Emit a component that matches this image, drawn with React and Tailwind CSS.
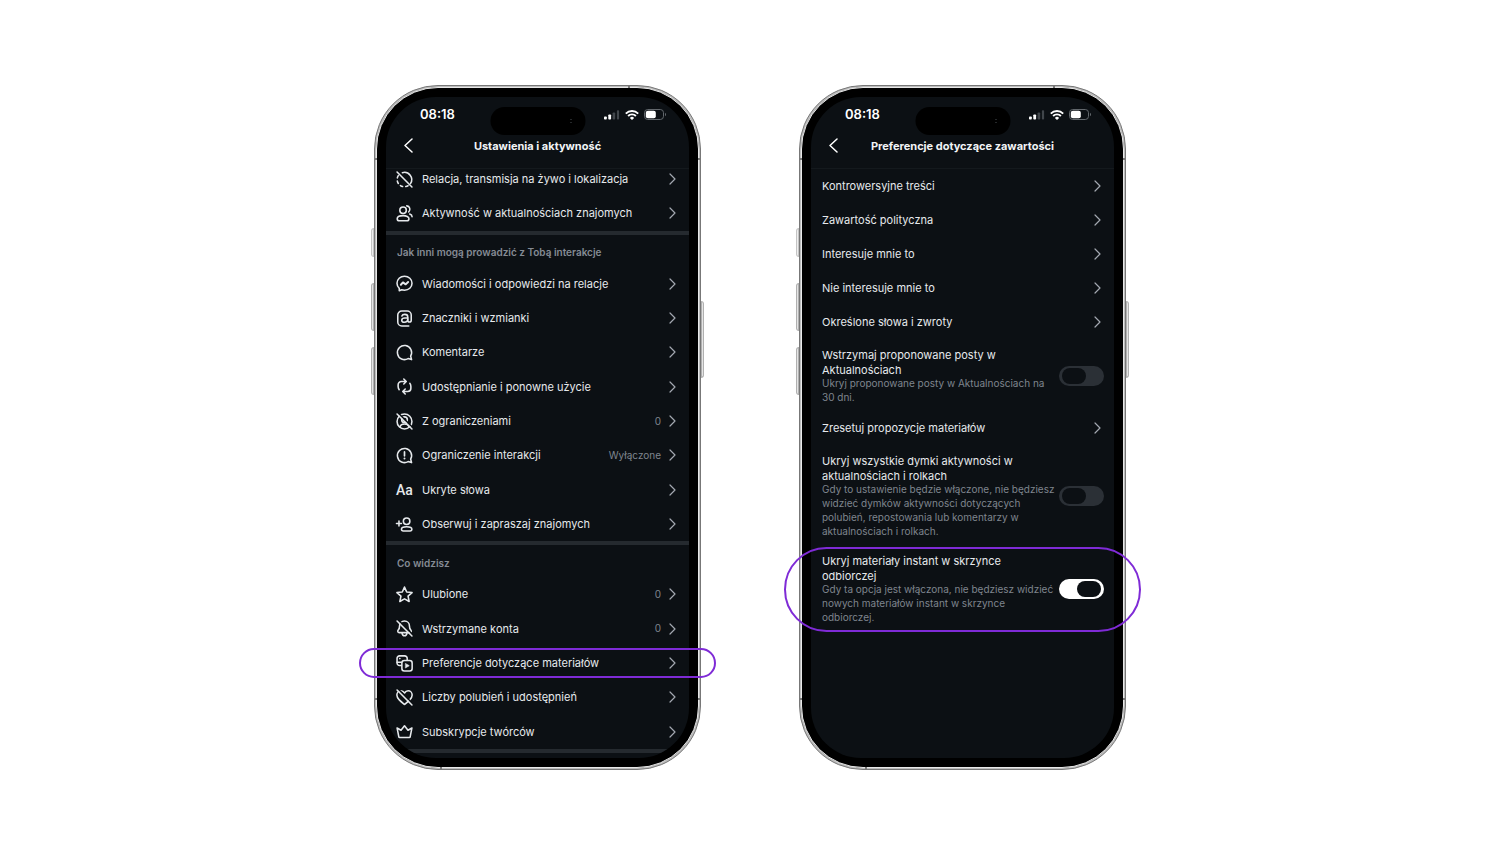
import React from "react";

const stroke = {
  fill: "none",
  stroke: "currentColor",
  strokeWidth: 2.2,
  strokeLinecap: "round",
  strokeLinejoin: "round",
};

function Icon({ children }) {
  return (
    <svg viewBox="0 0 24 24" className="size-[17px] shrink-0 overflow-visible" aria-hidden="true" {...stroke}>
      {children}
    </svg>
  );
}

const SLASH = (
  <>
    <path d="M3.5 .5 23.5 20.5" stroke="#0c1014" />
    <path d="M1.5 1.5 22.5 22.5" />
  </>
);
const BUBBLE = "M20.656 17.008a9.993 9.993 0 1 0-3.59 3.615L22 22Z";

const icons = {
  story: (
    <Icon>
      <path d="M9 2.300A10.300 10.300 0 0 1 20.600 17.600" />
      <path d="M1.900 9.800a10 10 0 0 1 1.300-3.200M1.900 14.200a10 10 0 0 0 1.400 3.400M6.300 20.500a10 10 0 0 0 3 1.400M13.800 22a10 10 0 0 0 3.200-1.200" />
      <path d="M1.500 1.500 22.500 22.500" />
    </Icon>
  ),
  friends: (
    <Icon>
      <circle cx="10" cy="7.500" r="4.600" />
      <path d="M10 15c-4.600 0-8.300 1.600-8.300 4.300 0 1.900 1.300 2.900 3.100 2.900h10.400c1.800 0 3.100-1 3.100-2.900 0-2.700-3.700-4.300-8.300-4.300Z" />
      <path d="M15.200 1.200a4.900 4.900 0 0 1 2.800 8.500M19.300 12.800c2 .7 3.400 1.900 3.400 3.700" />
    </Icon>
  ),
  messenger: (
    <Icon>
      <path d="M12 1.700C6 1.700 1.400 6 1.400 11.700c0 2.900 1.200 5.300 3.200 7.100V22.300l3.400-1.500c1.200.4 2.600.6 4 .6 6 0 10.600-4.100 10.600-9.700S18 1.700 12 1.700Z" />
      <path d="m6.900 13.800 2.900-3.300 3.900 2.700 3.400-3.300" strokeWidth="2.800" />
    </Icon>
  ),
  mention: (
    <Icon>
      <path d="M18 22.500H8.200A5.700 5.700 0 0 1 2.500 16.800V7.200A5.700 5.700 0 0 1 8.200 1.500h7.600a5.700 5.700 0 0 1 5.700 5.700v7.300c0 3.400-4.900 3.400-4.900 0V9.800c0-2.400-1.600-3.600-4.100-3.600-2.100 0-3.700.8-4.200 2.400" />
      <path d="M16.600 11.300h-4c-2.900 0-4.500.9-4.500 3 0 1.900 1.400 2.900 3.500 2.900 2.800 0 5-1.500 5-4.100" />
    </Icon>
  ),
  comment: (
    <Icon>
      <path d={BUBBLE} />
    </Icon>
  ),
  reshare: (
    <Icon>
      <path d="M4.500 16.500A8.300 8.300 0 0 1 3 12V9.500A4.500 4.500 0 0 1 7.500 5H14M11 1.500 14.500 5 11 8.500" />
      <path d="M19.500 7.500c1 1.200 1.500 2.700 1.500 4.500v2.500a4.500 4.500 0 0 1-4.500 4.500H10M13 22.500 9.500 19l3.500-3.500" />
    </Icon>
  ),
  restricted: (
    <Icon>
      <circle cx="12" cy="12" r="10.500" />
      <circle cx="12" cy="9.500" r="4" />
      <path d="M5.500 19.500c.8-2.500 3-4 6.500-4s5.700 1.500 6.500 4" />
      {SLASH}
    </Icon>
  ),
  limit: (
    <Icon>
      <path d={BUBBLE} />
      <path d="M12 7v5.500" strokeWidth="2.400" />
      <circle cx="12" cy="16.300" r=".6" fill="currentColor" strokeWidth="1.600" />
    </Icon>
  ),
  invite: (
    <Icon>
      <path d="M4.200 7.200v7M.7 10.700h7" />
      <circle cx="15" cy="7.500" r="4.600" />
      <path d="M15 15.200c-4 0-7.300 1.200-7.300 3.600 0 1.500 1.100 2.400 2.600 2.400h9.500c1.500 0 2.600-.9 2.600-2.400 0-2.400-3.400-3.600-7.400-3.600Z" />
    </Icon>
  ),
  star: (
    <Icon>
      <path d="m12 1.500 3.100 7 7.600.8-5.700 5.100 1.600 7.500L12 18.100l-6.600 3.800L7 14.400 1.300 9.300l7.600-.8Z" />
    </Icon>
  ),
  bell: (
    <Icon>
      <path d="M12 1.500c-4 0-7 3-7 6.800 0 3.200-.6 4.500-1.900 5.900-1.200 1.400-.6 3.600 1.500 3.600h14.800c2.100 0 2.700-2.200 1.500-3.600-1.300-1.400-1.900-2.700-1.900-5.900 0-3.800-3-6.800-7-6.800Z" />
      <path d="M8.500 18.500c.4 2.500 1.700 3.800 3.500 3.800s3.100-1.300 3.500-3.800" />
      {SLASH}
    </Icon>
  ),
  media: (
    <Icon>
      <path d="M7.500 14.800H5A3.500 3.500 0 0 1 1.500 11.300V4.700A3.500 3.500 0 0 1 5 1.200h7.300a3.500 3.500 0 0 1 3.500 3.500v2" />
      <path d="M1.500 10.300h6M5.300 5.100h.2" />
      <rect x="8.300" y="7.700" width="14.500" height="14.800" rx="3.500" />
      <path d="m13.700 12.200 5 2.900-5 2.900Z" fill="currentColor" strokeWidth="1" />
    </Icon>
  ),
  heart: (
    <Icon>
      <path d="M12 21.800c-1-.8-5.200-4.100-7.400-6.400C2.400 13.200 1.200 11 1.200 8.600 1.200 5.200 3.800 2.600 6.900 2.600c2.200 0 3.900 1.200 5.100 3.100 1.200-1.900 2.900-3.100 5.100-3.100 3.100 0 5.700 2.600 5.700 6 0 2.400-1.200 4.600-3.400 6.800-2.200 2.300-6.400 5.600-7.400 6.400Z" />
      {SLASH}
    </Icon>
  ),
  crown: (
    <Icon>
      <path d="m1.500 7 2.500 12.500a1.200 1.200 0 0 0 1.200 1h13.600a1.200 1.200 0 0 0 1.200-1L22.500 7l-5.600 3.300L12 4l-4.900 6.300Z" />
    </Icon>
  ),
};

function Chevron() {
  return (
    <svg viewBox="0 0 7 12" className="h-3 w-[7px] shrink-0 text-[#a3a8b0]" fill="none" stroke="currentColor" strokeWidth="1.200" strokeLinecap="round" strokeLinejoin="round" aria-hidden="true">
      <path d="m1 1 5 5-5 5" />
    </svg>
  );
}

function StatusBar() {
  return (
    <div className="relative flex h-[35px] items-center justify-between pr-[22px] pl-[34px]">
      <span className="text-[13px] font-semibold text-white">08:18</span>
      <div className="absolute top-[10px] left-1/2 flex h-7 w-[95px] -translate-x-1/2 flex-col items-end justify-center gap-0.5 rounded-full bg-black pr-[14px]">
        <span className="h-px w-px bg-[#4a5055]" />
        <span className="h-px w-px bg-[#4a5055]" />
      </div>
      <div className="flex items-center gap-[5px] text-white">
        <svg viewBox="0 0 16 10" className="h-[10px] w-4" fill="currentColor" aria-hidden="true">
          <rect x="0" y="6.500" width="2.800" height="3" rx=".8" />
          <rect x="4.300" y="4.500" width="2.800" height="5" rx=".8" />
          <rect x="8.600" y="2.500" width="2.600" height="7" rx=".8" fill="#41464b" />
          <rect x="12.900" y=".3" width="2.200" height="9.200" rx=".8" fill="#41464b" />
        </svg>
        <svg viewBox="0 0 14 10" className="h-[10px] w-[14px]" fill="none" stroke="currentColor" strokeWidth="1.900" aria-hidden="true">
          <path d="M.8 3.600a8.800 8.800 0 0 1 12.400 0M3.100 6a5.500 5.500 0 0 1 7.800 0" />
          <path d="M7 10 4.900 7.900a3 3 0 0 1 4.200 0Z" fill="currentColor" stroke="none" />
        </svg>
        <svg viewBox="0 0 23 11" className="h-[11px] w-[23px]" aria-hidden="true">
          <rect x=".5" y=".5" width="19" height="10" rx="3.200" fill="none" stroke="#62676c" />
          <rect x="1.800" y="1.800" width="10" height="7.400" rx="2" fill="#fff" />
          <path d="M21 3.800v3.400c1.400-.6 1.400-2.800 0-3.400Z" fill="#62676c" />
        </svg>
      </div>
    </div>
  );
}

function Header({ title }) {
  return (
    <header className="border-b border-[#14191d] pb-[9px]">
      <StatusBar />
      <div className="grid h-[27px] grid-cols-[24px_1fr_24px] items-center px-[11px]">
        <button type="button" aria-label="Wstecz" className="flex justify-center pr-0.5 text-white">
          <svg viewBox="0 0 9 15" className="h-[15px] w-[9px]" fill="none" stroke="currentColor" strokeWidth="1.500" strokeLinecap="round" strokeLinejoin="round" aria-hidden="true">
            <path d="M8 1 1 7.500 8 14" />
          </svg>
        </button>
        <h1 className="text-center text-[11px] leading-4 font-bold whitespace-nowrap text-[#f2f4f6]">{title}</h1>
      </div>
    </header>
  );
}

function Phone({ title, highlight, children }) {
  return (
    <section className="relative w-[327px] shrink-0">
      <i className="absolute top-[143px] -left-[3px] h-[29px] w-[3px] rounded-l-sm border border-[#c4c4c4] bg-[#eeeeee]" />
      <i className="absolute top-[198px] -left-[3px] h-12 w-[3px] rounded-l-sm border border-[#b0b0b0] bg-[#e4e4e4]" />
      <i className="absolute top-[262px] -left-[3px] h-12 w-[3px] rounded-l-sm border border-[#b0b0b0] bg-[#e4e4e4]" />
      <i className="absolute top-[216px] -right-[3px] h-[77px] w-[3px] rounded-r-sm border border-[#b0b0b0] bg-[#e4e4e4]" />
      <div className="rounded-[64px] border border-[#777777] bg-[#bcbcbc] p-px">
        <div className="rounded-[62px] border border-[#e8e8e8] bg-black p-[9px]">
          <div className="flex h-[661px] flex-col overflow-hidden rounded-[50px] bg-[#0c1014]">
            <Header title={title} />
            {children}
          </div>
        </div>
      </div>
      <i className="absolute top-[73px] left-0 h-[2px] w-[3px] bg-[#777777]" />
      <i className="absolute top-[73px] right-0 h-[2px] w-[3px] bg-[#777777]" />
      <i className="absolute bottom-[70px] left-0 h-[2px] w-[3px] bg-[#777777]" />
      <i className="absolute right-0 bottom-[70px] h-[2px] w-[3px] bg-[#777777]" />
      <i className="absolute top-0 right-[71px] h-[3px] w-[2px] bg-[#777777]" />
      <i className="absolute bottom-0 left-[66px] h-[3px] w-[2px] bg-[#777777]" />
      {highlight}
    </section>
  );
}

function Row({ icon, label, value }) {
  return (
    <li className="flex flex-1">
      <button type="button" className="flex w-full items-center pr-[13px] pl-[10px] text-left text-[#e6e9ec]">
        {icon === "aa" ? (
          <span className="w-[17px] text-center font-['Roboto',sans-serif] text-[14px] leading-4 font-medium" aria-hidden="true">Aa</span>
        ) : (
          icons[icon]
        )}
        <span className="ml-[9px] flex-1 text-[11px] whitespace-nowrap">{label}</span>
        {value && <span className="mr-2 text-[10px] text-[#7f858e]">{value}</span>}
        <Chevron />
      </button>
    </li>
  );
}

function Rows({ items }) {
  return items.map((item) => <Row key={item.label} {...item} />);
}

function Divider() {
  return <li className="h-1 shrink-0 bg-[#252a2f]" role="separator" />;
}

function SectionTitle({ children }) {
  return (
    <li className="flex h-8 shrink-0 items-center pt-1 pl-[11px]">
      <h2 className="text-[10px] font-semibold whitespace-nowrap text-[#858b94]">{children}</h2>
    </li>
  );
}

const visibility = [
  { icon: "story", label: "Relacja, transmisja na żywo i lokalizacja" },
  { icon: "friends", label: "Aktywność w aktualnościach znajomych" },
];
const interactions = [
  { icon: "messenger", label: "Wiadomości i odpowiedzi na relacje" },
  { icon: "mention", label: "Znaczniki i wzmianki" },
  { icon: "comment", label: "Komentarze" },
  { icon: "reshare", label: "Udostępnianie i ponowne użycie" },
  { icon: "restricted", label: "Z ograniczeniami", value: "0" },
  { icon: "limit", label: "Ograniczenie interakcji", value: "Wyłączone" },
  { icon: "aa", label: "Ukryte słowa" },
  { icon: "invite", label: "Obserwuj i zapraszaj znajomych" },
];
const content = [
  { icon: "star", label: "Ulubione", value: "0" },
  { icon: "bell", label: "Wstrzymane konta", value: "0" },
  { icon: "media", label: "Preferencje dotyczące materiałów" },
  { icon: "heart", label: "Liczby polubień i udostępnień" },
  { icon: "crown", label: "Subskrypcje twórców" },
];

function LinkRow({ label }) {
  return (
    <li>
      <button type="button" className="flex h-[34px] w-full items-center justify-between pr-[13px] pl-[11px] text-left text-[11px] text-[#e6e9ec]">
        {label}
        <Chevron />
      </button>
    </li>
  );
}

function ToggleRow({ id, title, description, on = false }) {
  return (
    <li className="flex items-center justify-between pt-[9px] pr-[10px] pb-[7px] pl-[11px]">
      <label htmlFor={id} className="whitespace-nowrap">
        <span className="block text-[11px] leading-[15px] text-[#e6e9ec]">
          {title.map((line) => (
            <span key={line} className="block">{line}</span>
          ))}
        </span>
        <span className="-mt-0.5 block text-[10px] leading-[14px] text-[#7f858e]">
          {description.map((line) => (
            <span key={line} className="block">{line}</span>
          ))}
        </span>
      </label>
      <input
        id={id}
        type="checkbox"
        role="switch"
        defaultChecked={on}
        className="flex h-5 w-[45px] shrink-0 appearance-none items-center rounded-full bg-[#2b3036] px-[3px] before:h-4 before:w-6 before:rounded-full before:bg-[#0c1014] checked:justify-end checked:bg-white"
      />
    </li>
  );
}

export default function App() {
  return (
    <main className="flex min-h-screen items-start justify-center gap-[98px] bg-white pt-[85px] font-['Inter','Noto_Sans',sans-serif]">
      <Phone
        title="Ustawienia i aktywność"
        highlight={<div className="pointer-events-none absolute -inset-x-[15px] top-[563px] h-[30px] rounded-full border-2 border-[#7f2bd6]" />}
      >
        <ul className="-mt-[7px] flex flex-1 flex-col pb-[5px]">
          <Rows items={visibility} />
          <Divider />
          <SectionTitle>Jak inni mogą prowadzić z Tobą interakcje</SectionTitle>
          <Rows items={interactions} />
          <Divider />
          <SectionTitle>Co widzisz</SectionTitle>
          <Rows items={content} />
          <Divider />
        </ul>
      </Phone>
      <Phone
        title="Preferencje dotyczące zawartości"
        highlight={<div className="pointer-events-none absolute -inset-x-[15px] top-[462px] h-[85px] rounded-full border-2 border-[#7f2bd6]" />}
      >
        <ul>
          <LinkRow label="Kontrowersyjne treści" />
          <LinkRow label="Zawartość polityczna" />
          <LinkRow label="Interesuje mnie to" />
          <LinkRow label="Nie interesuje mnie to" />
          <LinkRow label="Określone słowa i zwroty" />
          <ToggleRow
            id="pause-posts"
            title={["Wstrzymaj proponowane posty w", "Aktualnościach"]}
            description={["Ukryj proponowane posty w Aktualnościach na", "30 dni."]}
          />
          <LinkRow label="Zresetuj propozycje materiałów" />
          <ToggleRow
            id="hide-bubbles"
            title={["Ukryj wszystkie dymki aktywności w", "aktualnościach i rolkach"]}
            description={[
              "Gdy to ustawienie będzie włączone, nie będziesz",
              "widzieć dymków aktywności dotyczących",
              "polubień, repostowania lub komentarzy w",
              "aktualnościach i rolkach.",
            ]}
          />
          <ToggleRow
            id="hide-instants"
            on
            title={["Ukryj materiały instant w skrzynce", "odbiorczej"]}
            description={[
              "Gdy ta opcja jest włączona, nie będziesz widzieć",
              "nowych materiałów instant w skrzynce",
              "odbiorczej.",
            ]}
          />
        </ul>
      </Phone>
    </main>
  );
}
